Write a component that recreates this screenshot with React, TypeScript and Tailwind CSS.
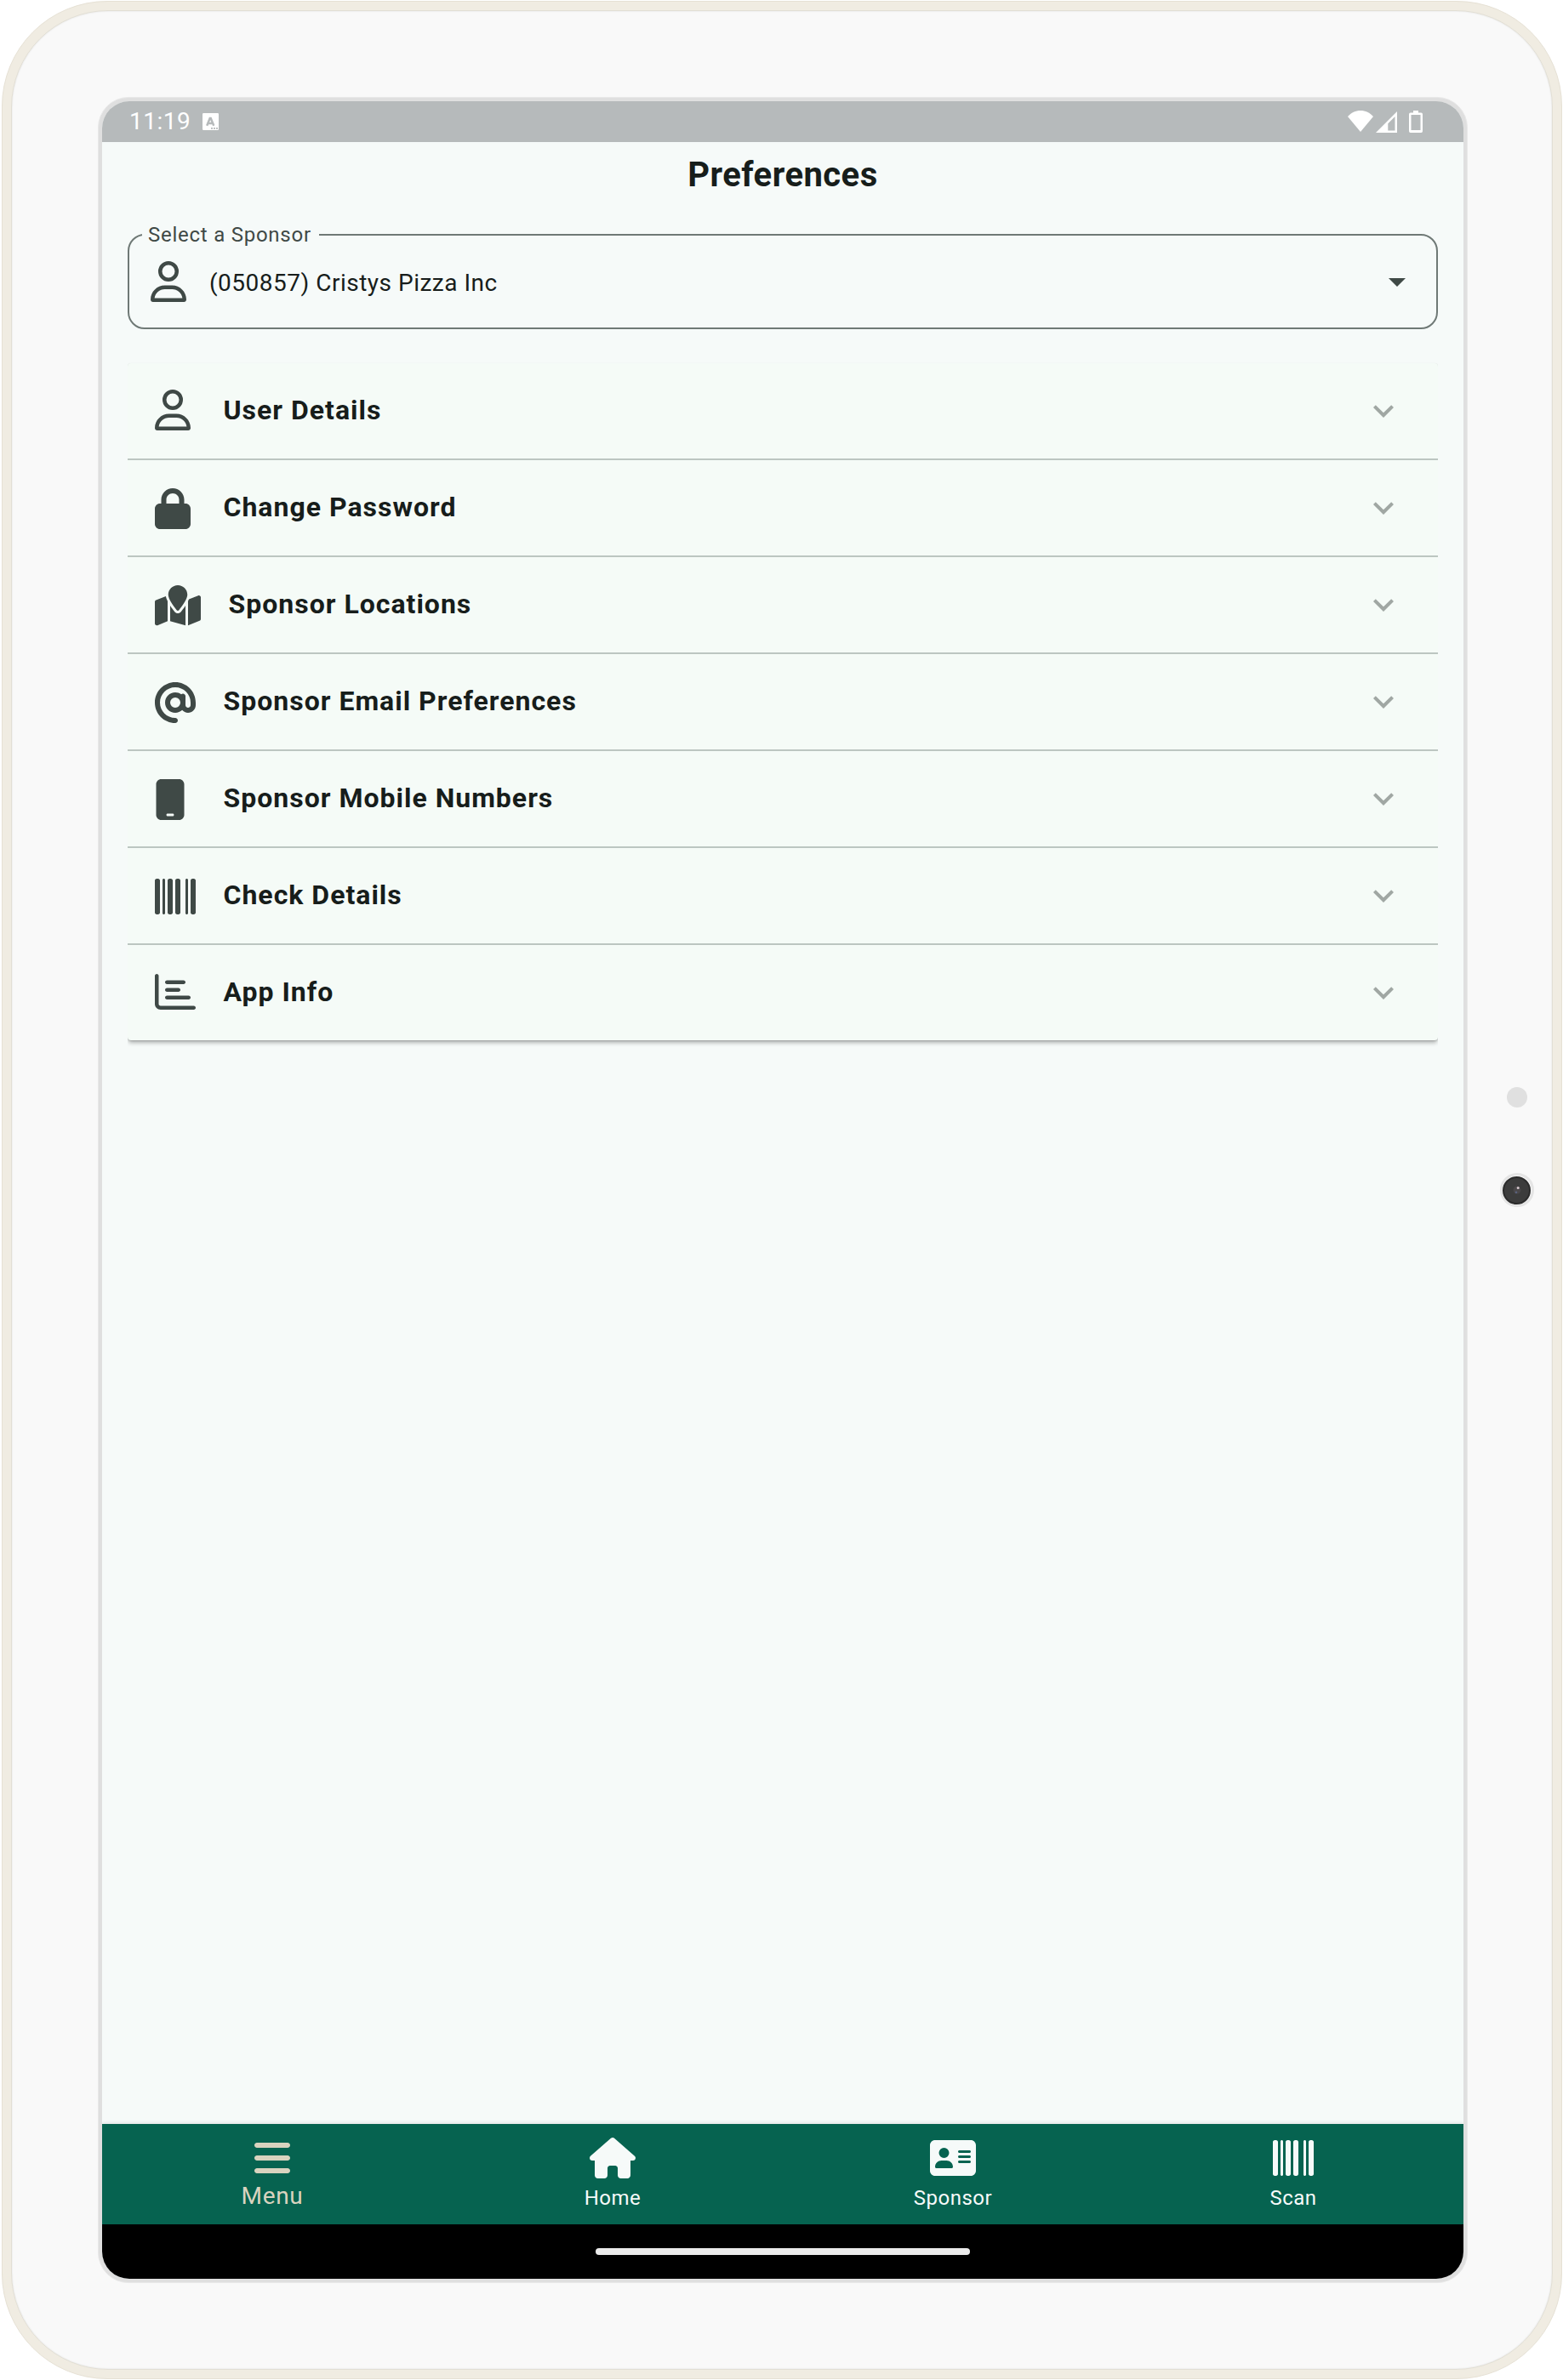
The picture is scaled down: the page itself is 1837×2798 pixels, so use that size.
import type { ReactNode } from "react";
import {
  FaAddressCard,
  FaAt,
  FaBarcode,
  FaBars,
  FaHouse,
  FaLock,
  FaMapLocation,
  FaMobile,
  FaRegChartBar,
  FaRegUser,
} from "react-icons/fa6";

type Item = { label: string; icon: ReactNode };

const sections: Item[] = [
  { label: "User Details", icon: <FaRegUser className="-mt-0.5 mr-1.5 h-12 w-[42px]" /> },
  { label: "Change Password", icon: <FaLock className="mt-0.5 mr-1.5 h-12 w-[42px]" /> },
  { label: "Sponsor Locations", icon: <FaMapLocation className="mt-0.5 h-12 w-[54px]" /> },
  { label: "Sponsor Email Preferences", icon: <FaAt className="mt-0.5 h-12 w-12" /> },
  { label: "Sponsor Mobile Numbers", icon: <FaMobile className="mt-0.5 mr-3 h-12 w-9" /> },
  { label: "Check Details", icon: <FaBarcode className="mt-0.5 h-12 w-12" /> },
  { label: "App Info", icon: <FaRegChartBar className="-mt-0.5 h-12 w-12" /> },
];

const tabs: Item[] = [
  { label: "Home", icon: <FaHouse className="h-12 w-[54px]" /> },
  { label: "Sponsor", icon: <FaAddressCard className="h-12 w-[54px]" /> },
  { label: "Scan", icon: <FaBarcode className="h-12 w-12" /> },
];

function StatusBar() {
  return (
    <div className="flex h-12 items-center bg-[#b6babb] pr-12 pl-8 text-white">
      <span className="text-[28px] leading-none tracking-[0.5px]">11:19</span>
      <svg viewBox="0 0 19 20" className="ml-3.5 h-5 w-[19px]">
        <rect width="19" height="20" rx="1.2" fill="#fff" />
        <path
          d="M5.200 14.800 8.700 6h1L13.300 14.800M7 12h4.800"
          fill="none"
          stroke="#b6babb"
          strokeWidth="2.500"
        />
        <path d="M10 17h2v1.800h-2zM13 17h2v1.800h-2zM16 17h2v1.800h-2z" fill="#b6babb" />
      </svg>
      <svg viewBox="0 0 30 25" className="-mt-px ml-auto h-[25px] w-[30px]">
        <path d="M0 7C4 2.6 9.200 0 15 0s11 2.600 15 7L15 25z" fill="#fff" />
      </svg>
      <svg viewBox="0 0 25 25" className="ml-[3px] h-[25px] w-[25px]">
        <path d="M0 25 25 0v25zM14.300 22.500h8.200V5.900l-8.200 8.300z" fill="#fff" fillRule="evenodd" />
      </svg>
      <svg viewBox="0 0 16 26" className="ml-3.5 h-[26px] w-4">
        <path
          d="M5 0h6v2.500h3.300A1.700 1.700 0 0 1 16 4.200v20A1.800 1.800 0 0 1 14.300 26H1.700A1.800 1.800 0 0 1 0 24.200v-20A1.700 1.700 0 0 1 1.700 2.500H5zM2.500 5v18h11V5z"
          fill="#fff"
          fillRule="evenodd"
        />
      </svg>
    </div>
  );
}

function SponsorSelect() {
  return (
    <div className="relative flex h-28 items-center rounded-[20px] border-2 border-[#6f7976] pr-[22px] pl-[25px]">
      <span className="absolute -top-[13px] left-[15px] bg-[#f6faf9] pr-[9px] pl-[7px] text-[24px] leading-[25px] tracking-[0.75px] text-[#3f4946]">
        Select a Sponsor
      </span>
      <FaRegUser className="h-12 w-[42px] text-[#3f4946]" />
      <span className="mt-1 ml-[27px] text-[28px] leading-8 tracking-[0.5px] text-[#171d1b]">
        (050857) Cristys Pizza Inc
      </span>
      <svg viewBox="0 0 24 24" className="ml-auto h-12 w-12 text-[#3f4946]">
        <path d="m7 10 5 5 5-5z" fill="currentColor" />
      </svg>
    </div>
  );
}

function SectionRow({ item }: { item: Item }) {
  return (
    <li className="box-content flex h-28 items-center gap-8 pr-10 pl-8 text-[#3f4946]">
      {item.icon}
      <span className="-mt-0.5 ml-[0.500px] text-[32px] leading-10 font-bold tracking-[1px] text-[#171d1b]">
        {item.label}
      </span>
      <svg viewBox="0 0 24 24" className="ml-auto h-12 w-12 text-[#a0a7a3]">
        <path d="M16.590 8.590 12 13.170 7.410 8.590 6 10l6 6 6-6z" fill="currentColor" />
      </svg>
    </li>
  );
}

function BottomNav() {
  return (
    <nav className="grid h-[118px] grid-cols-4 bg-[#066350] pt-4 text-[#f6faf9] shadow-[0_-1px_4px_rgba(0,0,0,0.1)]">
      <div className="flex flex-col items-center text-[#d9d3bf]">
        <FaBars className="h-12 w-[42px]" />
        <span className="mt-[5px] text-[28px] leading-8 tracking-[0.7px]">Menu</span>
      </div>
      {tabs.map((tab) => (
        <div key={tab.label} className="flex flex-col items-center">
          {tab.icon}
          <span className="mt-[9px] text-[24px] leading-7 tracking-[0.5px]">{tab.label}</span>
        </div>
      ))}
    </nav>
  );
}

function Screen() {
  return (
    <div className="flex h-[2560px] w-[1600px] flex-col overflow-hidden rounded-[32px] bg-[#f6faf9]">
      <StatusBar />
      <main className="flex flex-1 flex-col px-[30px] pt-[15px]">
        <h1 className="text-center text-[40px] leading-[48px] font-bold tracking-[0.450px] text-[#171d1b]">
          Preferences
        </h1>
        <div className="mt-[45px]">
          <SponsorSelect />
        </div>
        <div className="mt-[35px] overflow-hidden pt-[5px] pb-3">
          <ul className="divide-y-2 divide-[#bcc6c1] rounded-[4px] bg-[#f5fbf7] shadow-[0_4px_5px_-1px_rgba(0,0,0,0.28),0_1px_2px_rgba(0,0,0,0.14),0_0_1px_rgba(0,0,0,0.08)]">
            {sections.map((item) => (
              <SectionRow key={item.label} item={item} />
            ))}
          </ul>
        </div>
      </main>
      <BottomNav />
      <div className="flex h-16 items-center justify-center bg-black">
        <div className="h-2 w-[440px] rounded-full bg-[#ebebeb]" />
      </div>
    </div>
  );
}

function Sensors() {
  return (
    <div className="absolute top-[1276px] left-[1759px] flex w-[41px] flex-col items-center">
      <div className="h-6 w-6 rounded-full bg-[#e0e0e0]" />
      <div className="mt-[77px] flex h-10 w-10 items-center justify-center rounded-full border-[3px] border-[#e5e5e5] bg-[#f6f6f6]">
        <div className="flex h-[33px] w-[33px] shrink-0 items-center justify-center rounded-full border-2 border-[#2b2b2b] bg-[#3c3c3c]">
          <svg viewBox="0 0 10 10" className="h-2.5 w-2.5">
            <circle cx="5" cy="5" r="4.500" fill="#4a4749" />
            <circle cx="6.200" cy="2.500" r="1.500" fill="#d5c6cc" />
            <circle cx="4" cy="7.800" r="1.300" fill="#59627f" />
          </svg>
        </div>
      </div>
    </div>
  );
}

export default function App() {
  return (
    <div className="h-[2798px] w-[1837px] bg-white pt-px pl-0.5 font-['Roboto',sans-serif]">
      <div className="relative flex h-[2796px] w-[1834px] justify-center rounded-[124px] border border-[#e6e1d5] bg-[#f0ece2] p-[10px]">
        <div className="flex w-full justify-center rounded-[114px] border border-[#e2dfd5] bg-[#f9f9f9] pt-[101px] pl-0.5 shadow-[inset_0_0_2px_rgba(0,0,0,0.12)]">
          <div className="h-[2570px] w-[1610px] rounded-[36px] border border-[#e8e8e8] bg-[#dfdfdf] p-1">
            <Screen />
          </div>
        </div>
        <Sensors />
      </div>
    </div>
  );
}
